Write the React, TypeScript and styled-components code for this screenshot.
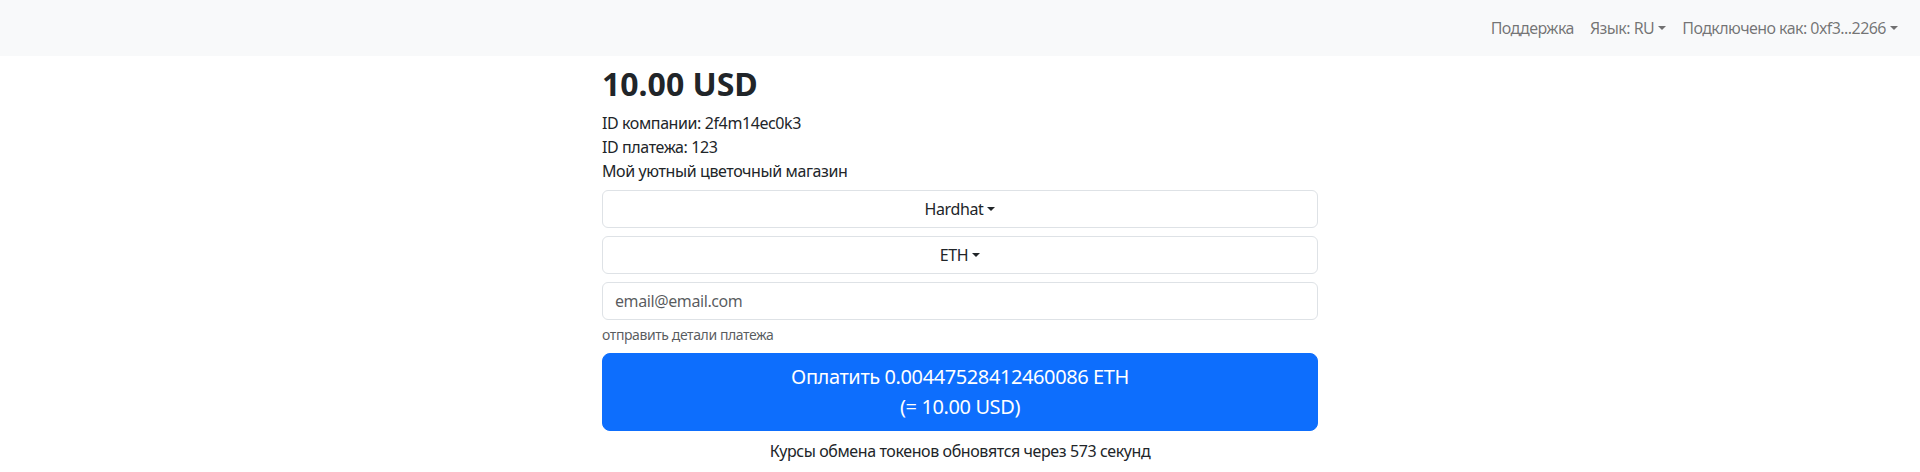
import React from "react";
import styled, { createGlobalStyle } from "styled-components";

const GlobalStyle = createGlobalStyle`
    *, *::before, *::after {
        box-sizing: border-box;
    }
    body {
        margin: 0;
        font-family: "Noto Sans", "Open Sans", sans-serif;
        font-size: 16px;
        line-height: 1.5;
        letter-spacing: -0.025em;
        color: #212529;
        background: #fff;
    }
`;

const Navbar = styled.nav`
    display: flex;
    justify-content: flex-end;
    align-items: center;
    height: 56px;
    padding: 0 14px;
    background: #f8f9fa;
`;

const NavLink = styled.a`
    padding: 8px;
    color: rgba(0, 0, 0, 0.55);
    text-decoration: none;
    white-space: nowrap;
    letter-spacing: -0.035em;
`;

const Caret = styled.span`
    display: inline-block;
    margin-left: 0.255em;
    vertical-align: 0.255em;
    border-top: 0.3em solid;
    border-right: 0.3em solid transparent;
    border-left: 0.3em solid transparent;
    border-bottom: 0;
`;

const Main = styled.main`
    width: 716px;
    margin: 9px auto 0;
`;

const Amount = styled.h2`
    margin: 0 0 8px;
    font-size: 32px;
    font-weight: 700;
    line-height: 1.2;
    letter-spacing: 0;
`;

const InfoLine = styled.div``;

const Form = styled.div`
    margin-top: 7px;
    display: flex;
    flex-direction: column;
`;

const DropdownButton = styled.button`
    height: 38px;
    margin-bottom: 8px;
    border: 1px solid #dee2e6;
    border-radius: 6px;
    background: #fff;
    color: #212529;
    font: inherit;
    letter-spacing: inherit;
    text-align: center;
`;

const EmailInput = styled.input`
    height: 38px;
    padding: 6px 12px;
    border: 1px solid #dee2e6;
    border-radius: 6px;
    font: inherit;
    letter-spacing: inherit;
    color: #212529;

    &::placeholder {
        color: rgba(33, 37, 41, 0.75);
    }
`;

const FormText = styled.div`
    margin: 4px 0 8px;
    font-size: 14px;
    color: rgba(33, 37, 41, 0.75);
`;

const PayButton = styled.button`
    padding: 8px 16px;
    border: 1px solid #0d6efd;
    border-radius: 8px;
    background: #0d6efd;
    color: #fff;
    font: inherit;
    letter-spacing: inherit;
    font-size: 20px;
    line-height: 1.5;
`;

const RateNote = styled.div`
    margin-top: 8px;
    text-align: center;
`;

export default function App() {
    return (
        <>
            <GlobalStyle />
            <Navbar>
                <NavLink href="#">Поддержка</NavLink>
                <NavLink href="#">
                    Язык: RU<Caret />
                </NavLink>
                <NavLink href="#">
                    Подключено как: 0xf3...2266<Caret />
                </NavLink>
            </Navbar>
            <Main>
                <Amount>10.00 USD</Amount>
                <InfoLine>ID компании: 2f4m14ec0k3</InfoLine>
                <InfoLine>ID платежа: 123</InfoLine>
                <InfoLine>Мой уютный цветочный магазин</InfoLine>
                <Form>
                    <DropdownButton>
                        Hardhat<Caret />
                    </DropdownButton>
                    <DropdownButton>
                        ETH<Caret />
                    </DropdownButton>
                    <EmailInput placeholder="email@email.com" />
                    <FormText>отправить детали платежа</FormText>
                    <PayButton>
                        Оплатить 0.00447528412460086 ETH
                        <br />
                        (= 10.00 USD)
                    </PayButton>
                    <RateNote>Курсы обмена токенов обновятся через 573 секунд</RateNote>
                </Form>
            </Main>
        </>
    );
}
